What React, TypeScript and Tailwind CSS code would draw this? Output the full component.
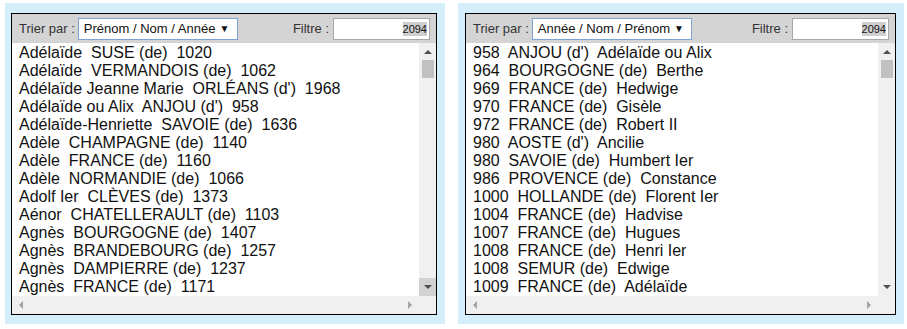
const byName = [
  "Adélaïde  SUSE (de)  1020",
  "Adélaïde  VERMANDOIS (de)  1062",
  "Adélaïde Jeanne Marie  ORLÉANS (d')  1968",
  "Adélaïde ou Alix  ANJOU (d')  958",
  "Adélaïde-Henriette  SAVOIE (de)  1636",
  "Adèle  CHAMPAGNE (de)  1140",
  "Adèle  FRANCE (de)  1160",
  "Adèle  NORMANDIE (de)  1066",
  "Adolf Ier  CLÈVES (de)  1373",
  "Aénor  CHATELLERAULT (de)  1103",
  "Agnès  BOURGOGNE (de)  1407",
  "Agnès  BRANDEBOURG (de)  1257",
  "Agnès  DAMPIERRE (de)  1237",
  "Agnès  FRANCE (de)  1171",
]

const byYear = [
  "958  ANJOU (d')  Adélaïde ou Alix",
  "964  BOURGOGNE (de)  Berthe",
  "969  FRANCE (de)  Hedwige",
  "970  FRANCE (de)  Gisèle",
  "972  FRANCE (de)  Robert II",
  "980  AOSTE (d')  Ancilie",
  "980  SAVOIE (de)  Humbert Ier",
  "986  PROVENCE (de)  Constance",
  "1000  HOLLANDE (de)  Florent Ier",
  "1004  FRANCE (de)  Hadvise",
  "1007  FRANCE (de)  Hugues",
  "1008  FRANCE (de)  Henri Ier",
  "1008  SEMUR (de)  Edwige",
  "1009  FRANCE (de)  Adélaïde",
]

const Tri = ({ dir, color }: { dir: "up" | "down" | "left" | "right"; color: string }) => {
  const pts = {
    up: "0,5 4,1 8,5",
    down: "0,1 8,1 4,5",
    left: "5,0 5,8 1,4",
    right: "1,0 1,8 5,4",
  }[dir]
  const vert = dir === "up" || dir === "down"
  return (
    <svg width={vert ? 8 : 6} height={vert ? 6 : 8} viewBox={vert ? "0 0 8 6" : "0 0 6 8"}>
      <polygon points={pts} fill={color} />
    </svg>
  )
}

const Panel = ({
  sort,
  rows,
  wrap,
  box,
  downHover,
}: {
  sort: string
  rows: string[]
  wrap: string
  box: string
  downHover?: boolean
}) => (
  <div className={`${wrap} h-[321px] bg-[#d4effb] pt-[10px] pb-[9px]`}>
    <div className={`${box} h-[302px] border border-black bg-white flex flex-col`}>
      <div className="h-[29px] bg-[#d4d4d4] flex items-center justify-between pl-[7px] pr-[6px] text-[13px] text-[#333]">
        <div className="flex items-center">
          <span>Trier par :</span>
          <div className="ml-[3px] h-[22px] w-[160px] border border-[#7da2d6] bg-white flex items-center px-[5px] text-[#111]">
            <span>{sort}</span>
            <span className="ml-[4px] text-[10px]">▼</span>
          </div>
        </div>
        <div className="flex items-center">
          <span>Filtre :</span>
          <div className="ml-[4px] h-[22px] w-[97px] border border-[#a8a8a8] bg-white flex items-center justify-end pr-[2px] text-[11px] text-[#111]">
            <span className="bg-[#cfcfcf] leading-[14px]">2094</span>
          </div>
        </div>
      </div>
      <div className="flex-1 flex min-h-0">
        <div className="flex-1 overflow-hidden pl-[7px] pt-px">
          {rows.map((r) => (
            <div key={r} className="h-[18px] leading-[18px] text-[16px] text-[#111] whitespace-pre">
              {r}
            </div>
          ))}
        </div>
        <div className="w-[17px] bg-[#f0f0f0] flex flex-col items-center">
          <div className="h-[17px] flex items-center justify-center">
            <Tri dir="up" color="#505050" />
          </div>
          <div className="w-[12px] h-[18px] bg-[#c1c1c1]" />
          <div className="flex-1" />
          <div className={`h-[18px] w-full flex items-center justify-center ${downHover ? "bg-[#d2d2d2]" : ""}`}>
            <Tri dir="down" color="#505050" />
          </div>
        </div>
      </div>
      <div className="h-[18px] flex bg-[#f0f0f0]">
        <div className="flex-1 flex items-center justify-between px-[6px]">
          <Tri dir="left" color="#a3a3a3" />
          <Tri dir="right" color="#a3a3a3" />
        </div>
        <div className="w-[17px]" />
      </div>
    </div>
  </div>
)

export default function App() {
  return (
    <div className="w-[907px] h-[329px] bg-white pt-[3px] flex font-['Liberation_Sans',Arial,sans-serif]">
      <Panel
        sort="Prénom / Nom / Année"
        rows={byName}
        wrap="ml-[5px] w-[440px] pl-[6px]"
        box="w-[426px]"
        downHover
      />
      <Panel
        sort="Année / Nom / Prénom"
        rows={byYear}
        wrap="ml-[13px] w-[446px] pl-[7px]"
        box="w-[431px]"
      />
    </div>
  )
}
